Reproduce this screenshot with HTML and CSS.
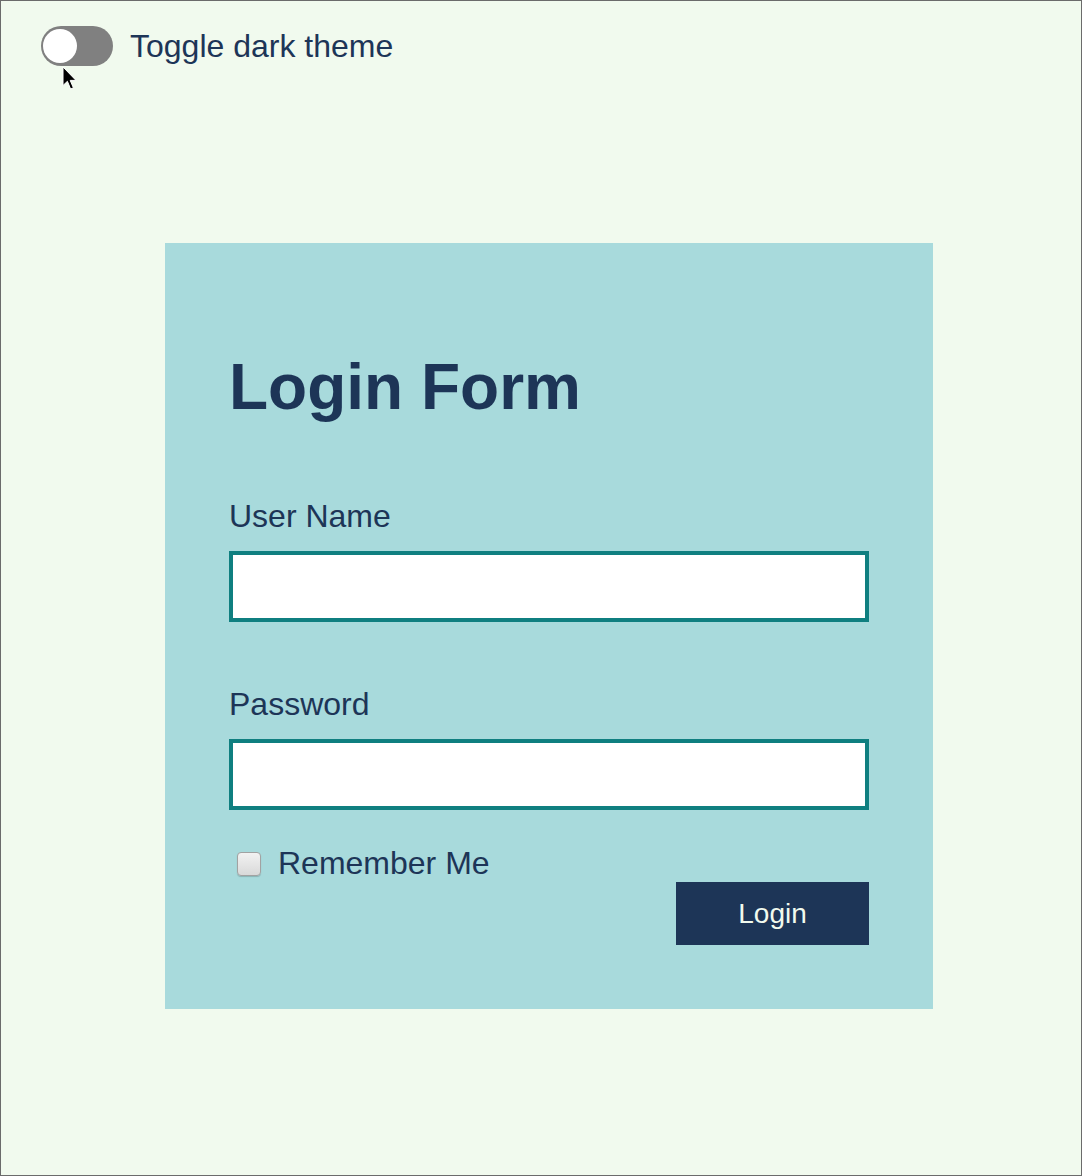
FILE: index.html
```html
<!DOCTYPE html>
<html lang="en">
<head>
<meta charset="utf-8">
<title>Login Form</title>
<link rel="stylesheet" href="styles.css">
</head>
<body>
  <div class="theme-row">
    <label class="switch">
      <input type="checkbox" class="switch-input">
      <span class="switch-track"><span class="switch-knob"></span></span>
    </label>
    <span class="theme-text">Toggle dark theme</span>
    <svg class="cursor" width="16" height="26" viewBox="0 0 16 26" aria-hidden="true">
      <path d="M1 1 L1 19.5 L5.4 15.3 L8.6 23 L11.4 21.8 L8.2 14.4 L14 14.4 Z" fill="#000" stroke="#fff" stroke-width="1" stroke-linejoin="miter"/>
    </svg>
  </div>

  <main class="card">
    <h1 class="title">Login Form</h1>
    <form class="form">
      <label class="field-label" for="user">User Name</label>
      <input class="field-input" id="user" type="text">
      <label class="field-label field-label-gap" for="pass">Password</label>
      <input class="field-input" id="pass" type="password">
      <label class="remember">
        <input type="checkbox" class="remember-box">
        <span>Remember Me</span>
      </label>
      <div class="actions">
        <button type="button" class="login-btn">Login</button>
      </div>
    </form>
  </main>
</body>
</html>
```

FILE: styles.css
```css
html, body {
  margin: 0;
  padding: 0;
}

body {
  box-sizing: border-box;
  width: 1082px;
  height: 1176px;
  border: 1px solid #6b6b6b;
  background: #f1faee;
  color: #1d3557;
  font-family: "Liberation Sans", Arial, sans-serif;
  overflow: hidden;
}

.theme-row {
  position: relative;
  display: flex;
  align-items: center;
  gap: 17px;
  padding: 25px 0 0 40px;
}

.switch {
  display: block;
  position: relative;
  width: 72px;
  height: 40px;
}

.switch-input {
  position: absolute;
  opacity: 0;
  width: 0;
  height: 0;
  margin: 0;
}

.switch-track {
  display: block;
  position: relative;
  width: 72px;
  height: 40px;
  border-radius: 20px;
  background: #808080;
}

.switch-knob {
  position: absolute;
  left: 2px;
  top: 3px;
  width: 34px;
  height: 34px;
  border-radius: 50%;
  background: #ffffff;
}

.theme-text {
  font-size: 32px;
  line-height: 37px;
}

.cursor {
  position: absolute;
  left: 61px;
  top: 65px;
}

.card {
  box-sizing: border-box;
  width: 768px;
  margin: 177px 0 0 164px;
  padding: 64px;
  background: #a8dadc;
}

.title {
  margin: 43px 0 0;
  font-size: 64px;
  line-height: 74px;
  font-weight: 700;
}

.form {
  display: flex;
  flex-direction: column;
  margin-top: 73px;
}

.field-label {
  display: block;
  padding-top: 1px;
  font-size: 32px;
  line-height: 37px;
}

.field-label-gap {
  margin-top: 63px;
}

.field-input {
  box-sizing: border-box;
  display: block;
  width: 100%;
  height: 71px;
  margin: 16px 0 0;
  border: 4px solid #0f7f80;
  background: #ffffff;
  font-size: 28px;
  padding: 0 12px;
  outline: none;
}

.remember {
  display: flex;
  align-items: center;
  gap: 17px;
  margin-top: 35px;
  padding-left: 8px;
  font-size: 32px;
  line-height: 37px;
}

.remember-box {
  -webkit-appearance: none;
  appearance: none;
  box-sizing: border-box;
  width: 24px;
  height: 24px;
  margin: 0;
  border: 1px solid #a2a2a2;
  border-radius: 4px;
  background: linear-gradient(#f2f2f2, #d9d9d9);
  box-shadow: 0 1px 1px rgba(0, 0, 0, 0.18);
}

.actions {
  display: flex;
  justify-content: flex-end;
}

.login-btn {
  width: 193px;
  height: 63px;
  border: none;
  background: #1d3557;
  color: #f1faee;
  font-family: "Liberation Sans", Arial, sans-serif;
  font-size: 28px;
  padding: 0;
}
```
